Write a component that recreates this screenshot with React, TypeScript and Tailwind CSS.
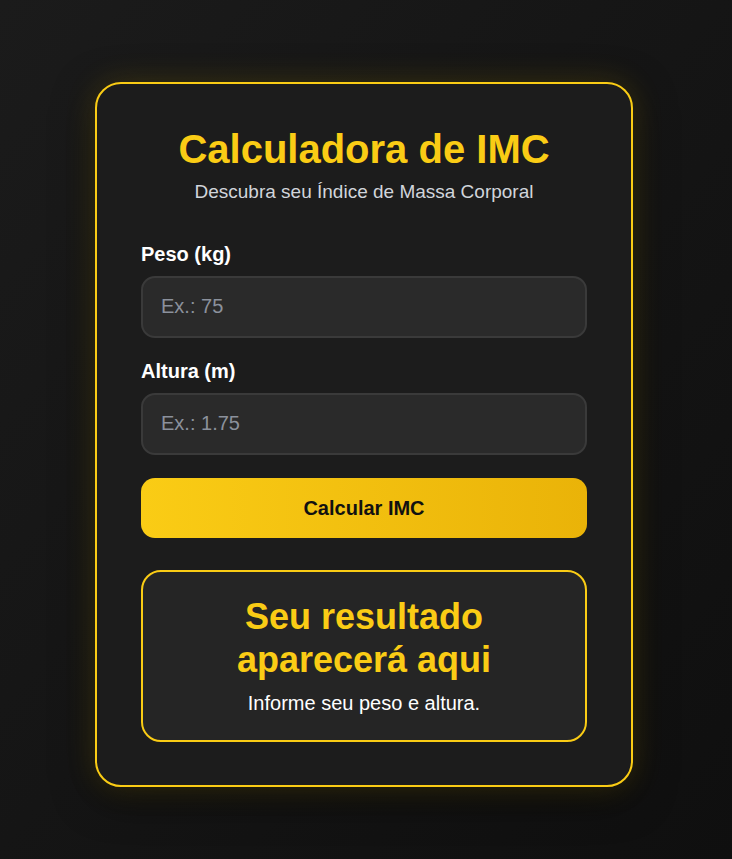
export default function App() {
  return (
    <div
      className="min-h-screen w-full flex justify-center pt-[82px] pb-[73px] pr-[4px] bg-gradient-to-br from-[#1b1b1b] to-[#0f0f0f]"
      style={{ fontFamily: '"Liberation Sans", Arial, sans-serif' }}
    >
      <div className="h-fit w-[538px] rounded-[26px] border-2 border-[#facc15] bg-[#1c1c1c] px-[44px] pt-[41px] pb-[43px] shadow-[0_0_30px_rgba(250,204,21,0.18),0_10px_40px_rgba(0,0,0,0.6)]">
        {/* Header */}
        <h1 className="text-center text-[40px] font-bold leading-[1.2] text-[#facc15]">Calculadora de IMC</h1>
        <p className="mt-[5px] text-center text-[19px] text-[#d1d5db]">Descubra seu Índice de Massa Corporal</p>

        {/* Form */}
        <div className="mt-[32px] flex flex-col">
          <label className="text-[20px] font-bold text-white">Peso (kg)</label>
          <input
            type="number"
            placeholder="Ex.: 75"
            className="mt-[7px] h-[62px] w-full rounded-[14px] border-2 border-[#3a3a3a] bg-[#2a2a2a] px-[18px] text-[20px] text-white placeholder:text-[#8b919c] outline-none"
          />

          <label className="mt-[18px] text-[20px] font-bold text-white">Altura (m)</label>
          <input
            type="number"
            placeholder="Ex.: 1.75"
            className="mt-[7px] h-[62px] w-full rounded-[14px] border-2 border-[#3a3a3a] bg-[#2a2a2a] px-[18px] text-[20px] text-white placeholder:text-[#8b919c] outline-none"
          />

          <button className="mt-[23px] h-[60px] w-full rounded-[14px] bg-gradient-to-r from-[#facc15] to-[#eab308] text-[20px] font-bold text-[#111]">
            Calcular IMC
          </button>
        </div>

        {/* Result */}
        <div className="mt-[32px] flex flex-col items-center rounded-[20px] border-2 border-[#facc15] bg-[#252525] px-[24px] pt-[23px] pb-[22px]">
          <h2 className="text-center text-[36px] font-bold leading-[43px] text-[#facc15]">
            Seu resultado
            <br />
            aparecerá aqui
          </h2>
          <p className="mt-[7px] text-center text-[20px] leading-[30px] text-white">Informe seu peso e altura.</p>
        </div>
      </div>
    </div>
  );
}
